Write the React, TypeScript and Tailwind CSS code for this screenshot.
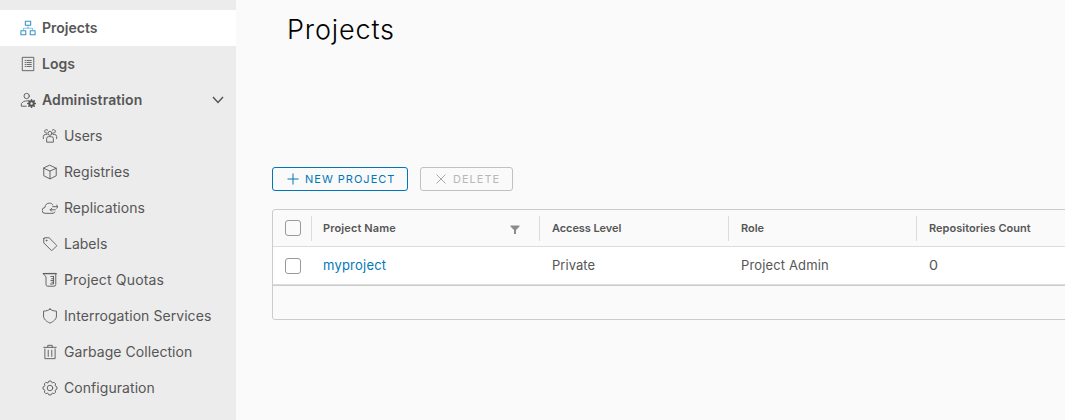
import React from "react";

function Icon({ children, className = "text-[#565656]" }: { children: React.ReactNode; className?: string }) {
  return (
    <svg viewBox="0 0 36 36" className={"size-4 shrink-0 " + className} fill="none" stroke="currentColor" strokeWidth="2" strokeLinejoin="round" strokeLinecap="round">
      {children}
    </svg>
  );
}

function gearPath(teeth: number) {
  const step = (Math.PI * 2) / teeth;
  const at = (angle: number, r: number) => `${(18 + r * Math.sin(angle)).toFixed(2)} ${(18 - r * Math.cos(angle)).toFixed(2)}`;
  let d = "";
  for (let i = 0; i < teeth; i++) {
    const a = i * step;
    d += `${i ? "L" : "M"}${at(a - step * 0.4, 13)}L${at(a - step * 0.2, 15.8)}L${at(a + step * 0.2, 15.8)}L${at(a + step * 0.4, 13)}`;
  }
  return d + "Z";
}

const items = [
  { label: "Users", tracking: "tracking-[-0.05px]", icon: (<><circle cx="18" cy="12" r="4.5" /><path d="M10.500 31v-7.500a4 4 0 0 1 4-4h7a4 4 0 0 1 4 4V31z" /><path d="M11 11.500A4 4 0 1 1 13 5M25 11.500A4 4 0 1 0 23 5M3 24v-5a5 5 0 0 1 5-4.500h3M33 24v-5a5 5 0 0 0-5-4.500h-3" /></>) },
  { label: "Registries", tracking: "tracking-[0.03px]", icon: (<path d="M18 3 32 9.500v17L18 33.500 4 26.500v-17zM4 9.500 18 16l14-6.500M18 16v17" />) },
  { label: "Replications", tracking: "tracking-[0.05px]", icon: (<path d="M29 27a5 5 0 0 1-4 3H7a6.500 6.500 0 0 1-.5-13C7 10.500 11 7 17 7c3.500 0 6 1.500 7.500 4M36 15H24m8.500-3.500L36 15l-3.500 3.500M18.500 22H30m-8-3.500L18.500 22l3.500 3.500" />) },
  { label: "Labels", tracking: "tracking-[0px]", icon: (<><path d="M4 6v9.500L20.500 32a2 2 0 0 0 2.800 0l9-9a2 2 0 0 0 0-2.800L16 4H6a2 2 0 0 0-2 2z" /><circle cx="10" cy="10" r="1" /></>) },
  { label: "Project Quotas", tracking: "tracking-[0.17px]", icon: (<path d="M3 4h30M31 4v24a4 4 0 0 1-4 4H13a4 4 0 0 1-4-4V11L3 4zM26 10v17h-7M26 10h-6M26 15h-4M26 19h-6M26 23h-4" />) },
  { label: "Interrogation Services", tracking: "tracking-[0.06px]", icon: (<path d="M18 2.500C22 5.500 27 7 32.500 7v11c0 7-6 12-14.500 16C9.500 30 3.500 25 3.500 18V7C9 7 14 5.500 18 2.500z" />) },
  { label: "Garbage Collection", tracking: "tracking-[0.06px]", icon: (<path d="M4 7.500h28M13 7V3h10v4M6.500 11v22h23V11M14 14v14M22 14v14" />) },
  { label: "Configuration", tracking: "tracking-[0.06px]", icon: (<><path d={gearPath(8)} /><circle cx="18" cy="18" r="6.2" /></>) },
];

const columns = [
  { head: "Project Name", value: "myproject", width: "w-[228px]", headStyle: "-ml-px tracking-[0.12px]", valueStyle: "-ml-px tracking-[0.22px] text-[#0079b8]", filter: true },
  { head: "Access Level", value: "Private", width: "w-[189px]", headStyle: "tracking-[-0.08px]", valueStyle: "tracking-[0.05px]" },
  { head: "Role", value: "Project Admin", width: "w-[188px]", headStyle: "tracking-[0px]", valueStyle: "tracking-[0.14px]" },
  { head: "Repositories Count", value: "0", width: "w-[260px]", headStyle: "tracking-[0.02px]", valueStyle: "inline-block origin-left scale-x-110" },
];

export default function App() {
  return (
    <div className="flex h-[420px] w-[1065px] overflow-hidden bg-[#fafafa] font-['Inter',sans-serif] text-[#565656]">
      <nav className="w-[236px] shrink-0 bg-[#ececec] pt-2.5 text-sm">
        <div className="flex h-9 items-center gap-1.5 bg-white pl-5 font-semibold">
          <Icon className="text-[#3594cc]"><path d="M12 3h12v9H12zM2 24h11v9H2zM23 24h11v9H23z" strokeWidth="2.4" /><path d="M18 12v6M7.500 23v-4.500h21V23" strokeWidth="1.3" /></Icon>
          <span>Projects</span>
        </div>
        <div className="flex h-9 items-center gap-1.5 pl-5 font-semibold">
          <Icon><path d="M6 3h25v30H6z" /><path d="M11.500 10h1m3 0h10M11.500 14.500h1m3 0h10M11.500 19h1m3 0h10M11.500 23.500h1m3 0h10" /></Icon>
          <span>Logs</span>
        </div>
        <div className="flex h-9 items-center gap-1.5 pl-5 pr-3 font-semibold">
          <Icon><circle cx="15" cy="9" r="6" /><path d="M14 32H3v-6c3-4 7-6 12-6h2" /><circle cx="26" cy="26" r="5" strokeWidth="4.5" /><path strokeWidth="3.500" d="M26 17.500v2m0 13v2M17.500 26h2m13 0h2M20 20l1.500 1.500m9 9L32 32M32 20l-1.500 1.500m-9 9L20 32" /></Icon>
          <span className="tracking-[0.1px]">Administration</span>
          <svg viewBox="0 0 12 12" className="ml-auto size-3" fill="none" stroke="#565656" strokeWidth="1.5"><path d="m1 3 5 5.500L11 3" /></svg>
        </div>
        {items.map((it) => (
          <div key={it.label} className="flex h-9 items-center gap-1.5 pl-[42px]">
            <Icon>{it.icon}</Icon>
            <span className={it.tracking}>{it.label}</span>
          </div>
        ))}
      </nav>
      <main className="flex min-w-0 grow flex-col pl-9">
        <h1 className="pl-[15px] pt-2.5 text-[27px] font-light leading-10 tracking-[0.85px] text-black">Projects</h1>
        <div className="mt-[117px] flex gap-3 text-[11px] tracking-[1px]">
          <button className="flex h-6 w-[136px] items-center rounded-[3px] border border-[#0077b8] pl-3.5 text-[#0077b8]">
            <svg viewBox="0 0 12 12" className="mr-1.5 size-3" fill="none" stroke="currentColor"><path d="M6 .5v11M.5 6h11" /></svg>
            <span>NEW PROJECT</span>
          </button>
          <button className="flex h-6 w-[93px] items-center rounded-[3px] border border-[#c1c1c1] pl-3.5 text-[#b8b8b8]">
            <svg viewBox="0 0 12 12" className="mr-1.5 size-3" fill="none" stroke="#a8a8a8"><path d="m1.500 1.500 9 9m0-9-9 9" /></svg>
            <span>DELETE</span>
          </button>
        </div>
        <div className="mt-[18px] w-[960px] rounded-[3px] border border-[#ccc]">
          <div className="flex h-9 items-center text-[11px] font-semibold">
            <span className="ml-3 mr-2.5 size-4 rounded-[3px] border border-[#999]" />
            {columns.map((c) => (
              <div key={c.head} className={"flex h-[25px] shrink-0 items-center border-l border-[#ddd] pl-3 " + c.width}>
                <span className={c.headStyle}>{c.head}</span>
                {c.filter && <svg viewBox="0 0 10 9" className="ml-auto mr-[19px] mt-0.5 h-[9px] w-2.5" fill="#8c8c8c"><path d="M.5.500h9v1L6 5v4H4V5L.5 1.500z" /></svg>}
              </div>
            ))}
          </div>
          <div className="flex h-[39px] items-center border-y border-[#ddd] bg-white text-[13px]">
            <span className="ml-3 mr-2.5 size-4 rounded-[3px] border border-[#999] bg-white" />
            {columns.map((c) => (
              <div key={c.head} className={"shrink-0 pl-[13px] " + c.width}>
                <span className={c.valueStyle}>{c.value}</span>
              </div>
            ))}
          </div>
          <div className="h-[34px] border-t border-[#ccc]" />
        </div>
      </main>
    </div>
  );
}
